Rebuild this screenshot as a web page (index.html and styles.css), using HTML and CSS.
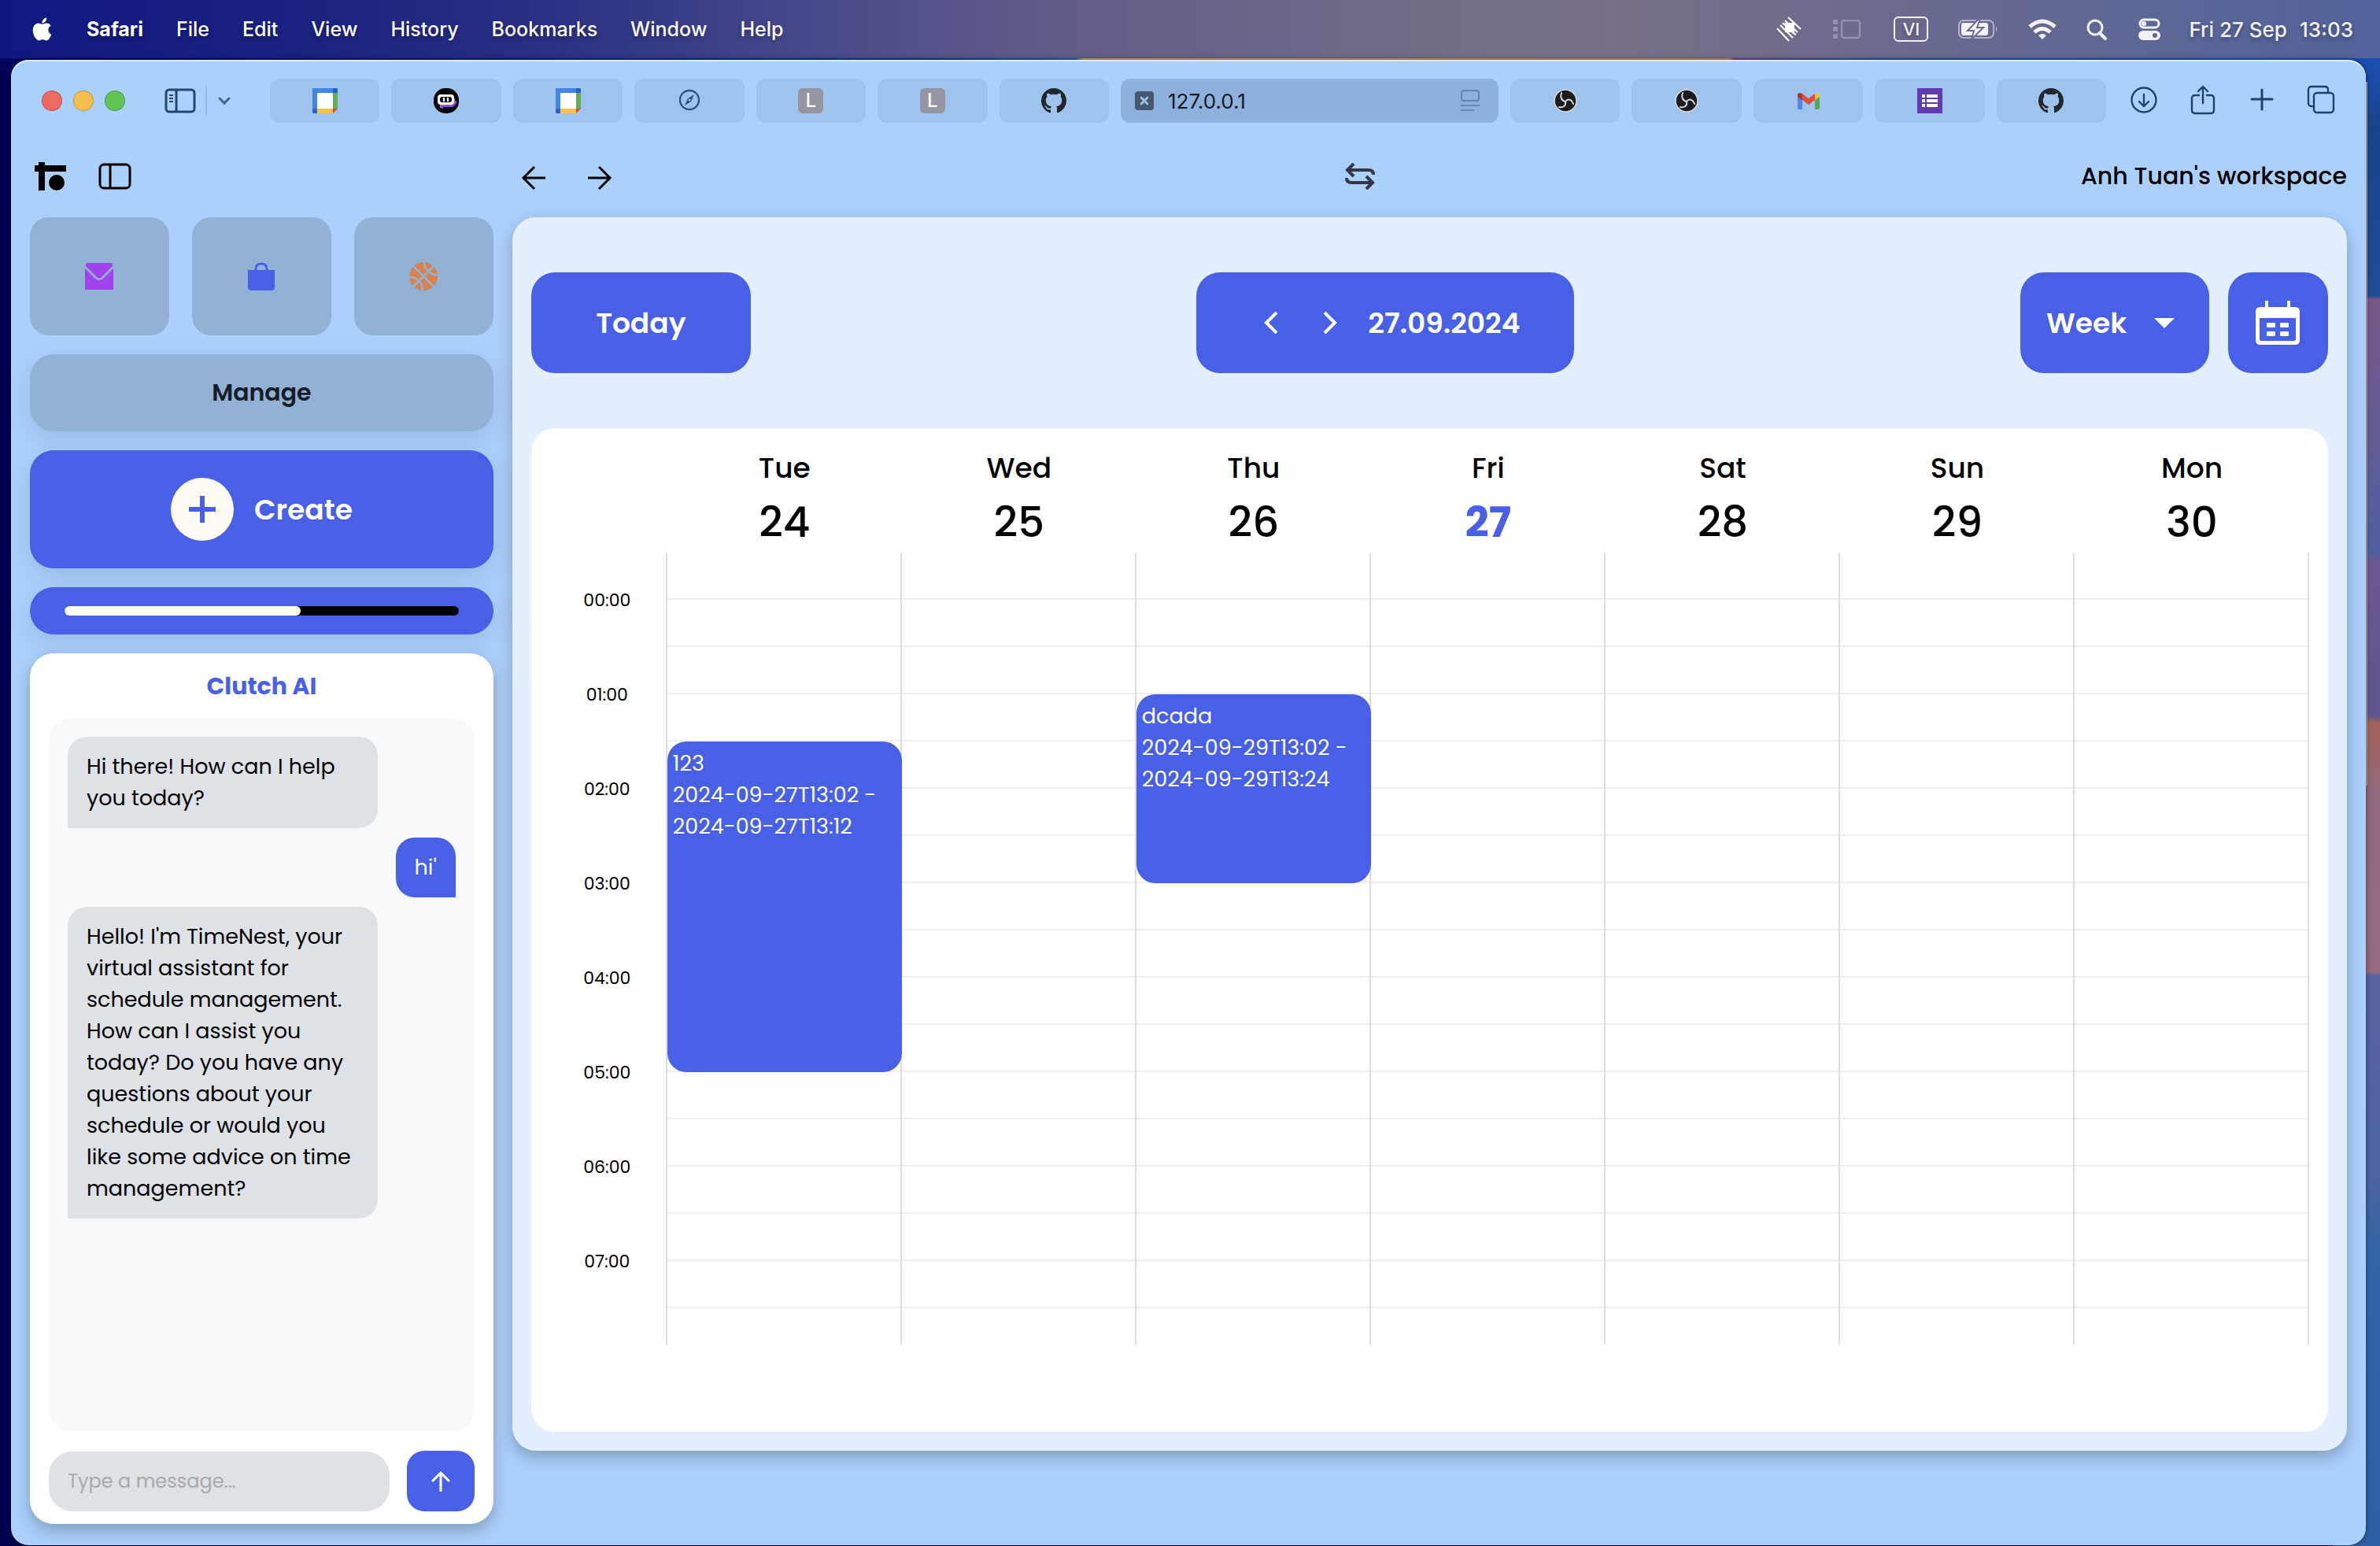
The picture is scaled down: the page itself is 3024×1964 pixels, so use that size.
FILE: index.html
```
<!DOCTYPE html>
<html lang="en">
<head>
<meta charset="utf-8">
<title>TimeNest</title>
<link rel="stylesheet" href="styles.css">
</head>
<body>
<svg class="sprite" aria-hidden="true">
  <symbol id="gcal" viewBox="0 0 32 32">
    <path fill="#fff" d="M6 6h20v20H6z"/><path fill="#4285e8" d="M1 0h25v6H6v20H0V1z"/><path fill="#2b62bd" d="M26 0h5l1 1v5h-6zM0 26h6v6H1l-1-1z"/><path fill="#61ad58" d="M26 6h6v20h-6z"/><path fill="#f4c150" d="M6 26h20v6H6z"/><path fill="#d94b3d" d="M26 26h6l-6 6z"/>
  </symbol>
  <symbol id="github" viewBox="0 0 16 16">
    <path fill="#22272e" d="M8 0C3.58 0 0 3.58 0 8c0 3.54 2.29 6.53 5.47 7.59.4.07.55-.17.55-.38 0-.19-.01-.82-.01-1.49-2.01.37-2.53-.49-2.69-.94-.09-.23-.48-.94-.82-1.13-.28-.15-.68-.52-.01-.53.63-.01 1.08.58 1.23.82.72 1.21 1.87.87 2.33.66.07-.52.28-.87.51-1.07-1.78-.2-3.64-.89-3.64-3.95 0-.87.31-1.59.82-2.15-.08-.2-.36-1.02.08-2.12 0 0 .67-.21 2.2.82.64-.18 1.32-.27 2-.27s1.36.09 2 .27c1.53-1.04 2.2-.82 2.2-.82.44 1.1.16 1.92.08 2.12.51.56.82 1.27.82 2.15 0 3.07-1.87 3.75-3.65 3.95.29.25.54.73.54 1.48 0 1.07-.01 1.93-.01 2.2 0 .21.15.46.55.38A8 8 0 0 0 16 8c0-4.42-3.58-8-8-8z"/>
  </symbol>
  <symbol id="obs" viewBox="0 0 32 32">
    <circle cx="16" cy="16" r="14" fill="#1c1c20" stroke="#d6d6da" stroke-width="1.6"/>
    <g fill="none" stroke="#d6d6da" stroke-width="2" stroke-linecap="round"><path d="M16 17c-5-1-7-6-5-11"/><path d="M16 17c3-4 8-3 10 3"/><path d="M16 17c1 5-2 8-8 7"/></g>
  </symbol>
</svg>

<header class="menubar">
  <nav class="menus" aria-label="Menu bar">
    <svg class="apple" viewBox="0 0 24 24" role="img" aria-label="Apple"><path fill="#fff" d="M12.152 6.896c-.948 0-2.415-1.078-3.96-1.04-2.04.027-3.91 1.183-4.961 3.014-2.117 3.675-.546 9.103 1.519 12.09 1.013 1.454 2.208 3.09 3.792 3.039 1.52-.065 2.09-.987 3.935-.987 1.831 0 2.35.987 3.96.948 1.637-.026 2.676-1.48 3.676-2.948 1.156-1.688 1.636-3.325 1.662-3.415-.039-.013-3.182-1.221-3.22-4.857-.026-3.04 2.48-4.494 2.597-4.559-1.429-2.09-3.623-2.324-4.39-2.376-2-.156-3.675 1.09-4.61 1.09zM15.53 3.83c.843-1.012 1.4-2.427 1.245-3.83-1.207.052-2.662.805-3.532 1.818-.78.896-1.454 2.338-1.273 3.714 1.338.104 2.715-.688 3.559-1.701"/></svg>
    <strong>Safari</strong><span>File</span><span>Edit</span><span>View</span><span>History</span><span>Bookmarks</span><span>Window</span><span>Help</span>
  </nav>
  <div class="status">
    <svg width="32" height="32" viewBox="0 0 32 32"><path fill="#fff" d="M11 8h12v12H11z"/><g stroke="#fff" stroke-width="2.2" fill="none"><path d="M15 1l16 15M1 15l15 16"/><path d="M11 5l4 4M23 16l4 4M5 11l16 16M8 8l3 3M20 20l5 3"/></g></svg>
    <svg class="dim" width="36" height="25" viewBox="0 0 36 25"><g fill="#9391ab"><rect width="6" height="6" rx="1"/><rect y="9" width="6" height="6" rx="1"/><rect y="18" width="6" height="6" rx="1"/></g><rect x="11" y="1" width="23" height="22" rx="3" fill="none" stroke="#9391ab" stroke-width="2.4"/></svg>
    <span class="lang">VI</span>
    <svg class="battery" width="52" height="26" viewBox="0 0 52 26"><rect x="1" y="2" width="44" height="22" rx="6" fill="none" stroke="#b2b2c6" stroke-width="2"/><path fill="#b2b2c6" d="M48 9q3 4 0 8z"/><rect x="4" y="5" width="34" height="16" rx="3" fill="#f2f2f6"/><path fill="#f2f2f6" stroke="#6a6b92" stroke-width="2" d="M26 0L12 15h8l-3 11 15-15h-8l4-11z"/></svg>
    <svg class="wifi" width="36" height="27" viewBox="0 0 36 27"><g fill="none" stroke="#f2f2f6" stroke-width="5"><path d="M2 10q16-14 32 0"/><path d="M8 17q10-9 20 0"/></g><path fill="#f2f2f6" d="M18 26l-5-5q5-4 10 0z"/></svg>
    <svg class="search" width="26" height="27" viewBox="0 0 26 27"><circle cx="11" cy="11" r="9" fill="none" stroke="#f2f2f6" stroke-width="3"/><path d="M17 18l7 7" stroke="#f2f2f6" stroke-width="4" stroke-linecap="round"/></svg>
    <svg class="control" width="28" height="28" viewBox="0 0 28 28"><rect x="2" y="2" width="24" height="10" rx="5" fill="none" stroke="#f2f2f6" stroke-width="3"/><circle cx="7" cy="7" r="3" fill="#f2f2f6"/><rect y="16" width="28" height="12" rx="6" fill="#f2f2f6"/><circle cx="21" cy="22" r="3" fill="#60668f"/></svg>
    <span class="clock"><span>Fri 27 Sep</span><span>13:03</span></span>
  </div>
</header>

<div class="window">
  <div class="toolbar">
    <div class="lights"><i class="close"></i><i class="minimise"></i><i class="expand"></i></div>
    <button class="tool" aria-label="Show sidebar"><svg width="40" height="32" viewBox="0 0 40 32" fill="none" stroke="#25466f" stroke-width="3"><rect x="2" y="2" width="36" height="28" rx="4"/><path d="M15 2v28"/><path d="M6 9h5M6 13h5M6 17h5" stroke-width="2"/></svg></button>
    <button class="tool more" aria-label="Tab groups"><svg width="16" height="10" viewBox="0 0 16 10" fill="none" stroke="#41638e" stroke-width="3" stroke-linecap="round"><path d="M2 2l6 6 6-6"/></svg></button>
    <div class="tabs">
      <button class="tab" aria-label="Google Calendar"><svg><use href="#gcal"/></svg></button>
      <button class="tab" aria-label="Poe"><svg viewBox="0 0 32 32"><rect width="32" height="32" rx="15"/><path fill="none" stroke="#7b4fe0" stroke-width="2" d="M11 26v-3h13l4-4v-3"/><path fill="none" stroke="#d94ec4" stroke-width="2" d="M9 25v-4h14l3-3v-5"/><rect x="5" y="8" width="21" height="13" rx="4" fill="#fff"/><rect x="8" y="11" width="15" height="7" rx="3"/><path stroke="#fff" stroke-width="2.4" stroke-linecap="round" d="M13 13v3M18 13v3"/></svg></button>
      <button class="tab" aria-label="Google Calendar"><svg><use href="#gcal"/></svg></button>
      <button class="tab" aria-label="Start page"><svg viewBox="0 0 32 32"><circle cx="16" cy="15" r="12" fill="none" stroke="#2f5383" stroke-width="2.4"/><path fill="#2f5383" fill-rule="evenodd" d="M22 8l-4 9-8 5 4-9zM16 13.500a1.500 1.500 0 1 0 0 3 1.500 1.500 0 0 0 0-3z"/></svg></button>
      <button class="tab"><span class="letter">L</span></button>
      <button class="tab"><span class="letter">L</span></button>
      <button class="tab" aria-label="GitHub"><svg><use href="#github"/></svg></button>
      <div class="tab address">
        <button class="plain" aria-label="Close tab"><svg width="24" height="24" viewBox="0 0 24 24"><rect width="24" height="24" rx="4" fill="#48596f"/><path d="M8 8l8 8M16 8l-8 8" stroke="#a6c3e6" stroke-width="2.600" stroke-linecap="round"/></svg></button>
        <input class="url" aria-label="Address" value="127.0.0.1">
        <svg class="reader" viewBox="0 0 24 28" fill="none" stroke="#6886ab" stroke-width="2"><rect x="1" y="1" width="22" height="13" rx="3"/><path d="M0 20h24M0 26h17"/></svg>
      </div>
      <button class="tab" aria-label="OBS"><svg><use href="#obs"/></svg></button>
      <button class="tab" aria-label="OBS"><svg><use href="#obs"/></svg></button>
      <button class="tab" aria-label="Gmail"><svg viewBox="0 0 32 32"><path fill="#4f86ec" d="M2 10l6 4v13H4q-2 0-2-2z"/><path fill="#58a55c" d="M30 10l-6 4v13h4q2 0 2-2z"/><path fill="#d8503f" d="M8 7l8 6 8-6v8l-8 6-8-6z"/><path fill="#b3312c" d="M2 9q0-3 3-3l3 1v8l-6-4z"/><path fill="#f2bf42" d="M30 9q0-3-3-3l-3 1v8l6-4z"/></svg></button>
      <button class="tab" aria-label="Google Forms"><svg viewBox="0 0 32 32"><rect width="32" height="32" rx="1" fill="#623bae"/><path stroke="#fff" stroke-width="4" d="M6 10h4M12 10h14M6 16h4M12 16h14M6 22h4M12 22h14"/></svg></button>
      <button class="tab" aria-label="GitHub"><svg><use href="#github"/></svg></button>
    </div>
    <div class="actions">
      <button class="plain" aria-label="Downloads"><svg width="36" height="40" viewBox="0 0 36 40" fill="none" stroke="#20416b" stroke-width="2.400" stroke-linecap="round"><circle cx="18" cy="19" r="15.500"/><path d="M18 12v15M12 21l6 6 6-6"/></svg></button>
      <button class="plain" aria-label="Share"><svg width="36" height="40" viewBox="0 0 36 40" fill="none" stroke="#20416b" stroke-width="2.400" stroke-linecap="round"><path d="M13 13H8q-4 0-4 4v15q0 4 4 4h20q4 0 4-4V17q0-4-4-4h-5M18 23V2M12 8l6-6 6 6"/></svg></button>
      <button class="plain" aria-label="New tab"><svg width="36" height="40" viewBox="0 0 36 40" stroke="#20416b" stroke-width="3" stroke-linecap="round"><path d="M18 6v25M5 18h26"/></svg></button>
      <button class="plain" aria-label="Tab overview"><svg width="36" height="40" viewBox="0 0 36 40" fill="none" stroke="#20416b" stroke-width="2.400"><rect x="9" y="10" width="25" height="25" rx="4"/><path d="M9 27H6q-4 0-4-4V6q0-4 4-4h17q4 0 4 4v4"/></svg></button>
    </div>
  </div>

  <header class="appbar">
    <div class="brand">
      <svg width="40" height="38" viewBox="0 0 40 38" role="img" aria-label="TimeNest"><path d="M5 1h8v4h27v8H13v24H5V13H0V5h5z"/><circle cx="28" cy="27" r="10"/></svg>
      <button class="plain" aria-label="Toggle sidebar"><svg width="42" height="34" viewBox="0 0 42 34" fill="none" stroke="#000" stroke-width="3"><rect x="2" y="2" width="38" height="30" rx="5"/><path d="M15 2v30"/></svg></button>
    </div>
    <div class="route">
      <div class="history">
        <button class="plain" aria-label="Back"><svg width="32" height="32" viewBox="0 0 32 32" fill="none" stroke="#000" stroke-width="3"><path d="M31 16H3M17 2L3 16l14 14"/></svg></button>
        <button class="plain" aria-label="Forward"><svg width="32" height="32" viewBox="0 0 32 32" fill="none" stroke="#000" stroke-width="3"><path d="M1 16h28M15 2l14 14-14 14"/></svg></button>
      </div>
      <button class="plain" aria-label="Switch workspace"><svg width="38" height="34" viewBox="0 0 38 34" fill="none" stroke="#343741" stroke-width="4"><path d="M11 1L3 9l8 8M3 9h27q6 0 6 6M27 17l8 8-8 8M35 25H8q-6 0-6-6"/></svg></button>
      <h1 class="workspace">Anh Tuan's workspace</h1>
    </div>
  </header>

  <div class="content">
    <aside class="sidebar">
      <div class="tiles">
        <button class="tile" aria-label="Mail"><svg width="36" height="34" viewBox="0 0 36 34" fill="#a142ec"><path d="M3 0h30q2 0 2 4L21 18q-3 3-6 0L1 4q0-4 2-4z"/><path d="M0 7l13 13q5 4 10 0L36 7v27H0z"/></svg></button>
        <button class="tile" aria-label="Work"><svg width="36" height="36" viewBox="0 0 36 36"><path fill="#4860e6" d="M1 10h34v22q0 4-4 4H5q-4 0-4-4z"/><path fill="none" stroke="#4860e6" stroke-width="3" d="M11 11V9q0-7 7-7t7 7v2"/></svg></button>
        <button class="tile" aria-label="Sport"><svg width="36" height="36" viewBox="0 0 36 36"><circle cx="18" cy="18" r="18" fill="#d9814e"/><path fill="none" stroke="#91b1d5" stroke-width="2.600" d="M5 5l26 26M31 5L5 31M19 0q0 14 17 17M0 19q16 0 17 17"/></svg></button>
      </div>
      <button class="manage">Manage</button>
      <button class="create"><span class="plus"><svg width="34" height="34" viewBox="0 0 34 34" stroke="#4860e6" stroke-width="6"><path d="M17 0v34M0 17h34"/></svg></span>Create</button>
      <div class="progress"><div class="track" role="progressbar" aria-label="Progress" aria-valuenow="60"><div class="fill" style="width:60%"></div></div></div>
      <section class="chat">
        <h2 class="chat-title">Clutch AI</h2>
        <div class="messages">
          <p class="msg">Hi there! How can I help you today?</p>
          <p class="msg mine">hi'</p>
          <p class="msg">Hello! I'm TimeNest, your virtual assistant for schedule management. How can I assist you today? Do you have any questions about your schedule or would you like some advice on time management?</p>
        </div>
        <form class="composer">
          <input class="composer-text" aria-label="Message" placeholder="Type a message...">
          <button class="send" type="button" aria-label="Send"><svg width="24" height="26" viewBox="0 0 24 26" fill="none" stroke="#fff" stroke-width="3" stroke-linecap="round"><path d="M12 25V2M2 12L12 2l10 10"/></svg></button>
        </form>
      </section>
    </aside>

    <main class="panel">
      <div class="controls">
        <button class="control-btn today">Today</button>
        <div class="control-btn date">
          <button class="plain" aria-label="Previous"><svg width="18" height="28" viewBox="0 0 18 28" fill="none" stroke="#fff" stroke-width="4"><path d="M16 1L3 14l13 13"/></svg></button>
          <button class="plain" aria-label="Next"><svg width="18" height="28" viewBox="0 0 18 28" fill="none" stroke="#fff" stroke-width="4"><path d="M2 1l13 13L2 27"/></svg></button>
          <span class="date-text">27.09.2024</span>
        </div>
        <div class="view">
          <div class="picker">
            <select class="control-btn picker-select" aria-label="View"><option>Week</option></select>
            <svg class="caret" width="26" height="13" viewBox="0 0 26 13"><path fill="#fff" d="M0 0h26L13 13z"/></svg>
          </div>
          <button class="control-btn cal" aria-label="Choose date"><svg width="56" height="58" viewBox="0 0 56 58"><path fill="none" stroke="#fff" stroke-width="4" d="M14 12V1M42 12V1"/><path fill="#fff" fill-rule="evenodd" d="M6 9h44q6 0 6 6v36q0 6-6 6H6q-6 0-6-6V15q0-6 6-6zM5 23v27q0 2 2 2h42q2 0 2-2V23z"/><g fill="#fff"><rect x="14" y="29" width="11" height="6" rx="1"/><rect x="31" y="29" width="11" height="6" rx="1"/><rect x="14" y="40" width="11" height="6" rx="1"/><rect x="31" y="40" width="11" height="6" rx="1"/></g></svg></button>
        </div>
      </div>

      <section class="calendar">
        <div class="days">
          <div></div>
          <div class="day">Tue<b>24</b></div>
          <div class="day">Wed<b>25</b></div>
          <div class="day">Thu<b>26</b></div>
          <div class="day current">Fri<b>27</b></div>
          <div class="day">Sat<b>28</b></div>
          <div class="day">Sun<b>29</b></div>
          <div class="day">Mon<b>30</b></div>
        </div>
        <div class="schedule">
          <div class="hours"><span>00:00</span><span>01:00</span><span>02:00</span><span>03:00</span><span>04:00</span><span>05:00</span><span>06:00</span><span>07:00</span></div>
          <div class="column">
            <article class="event" style="grid-row:5 / span 7">123<br>2024-09-27T13:02 -<br>2024-09-27T13:12</article>
          </div>
          <div class="column"></div>
          <div class="column">
            <article class="event" style="grid-row:4 / span 4">dcada<br>2024-09-29T13:02 -<br>2024-09-29T13:24</article>
          </div>
          <div class="column"></div>
          <div class="column"></div>
          <div class="column"></div>
          <div class="column"></div>
        </div>
      </section>
    </main>
  </div>
</div>
</body>
</html>
```
FILE: styles.css
```
* { box-sizing: border-box; }

:root {
  --blue: #4860e6;
  --sky: #abd0fb;
  --steel: #91b1d5;
  --grey: #dee1e6;
  --radius: 30px;
}

body {
  margin: 0;
  min-height: 100vh;
  display: flex;
  flex-direction: column;
  font-family: Poppins, Inter, sans-serif;
  font-size: 26px;
  color: #000;
  background:
    linear-gradient(#b5b5b0, #a9a5a0) right 16px top 104px / 3px 894px no-repeat,
    linear-gradient(#1c4fb4 76px, #1a4489 160px, #1f4c95 376px, #78578a 380px, #4f609f 700px, #6b5890 716px, #5f5590 910px, #a26258 918px, #93697c 1010px, #986a7e 1234px, #5a62a0 1240px, #4c63a2 1500px, #2f66a8 1600px, #2c60a4) right / 60px 100% no-repeat,
    linear-gradient(90deg, #04045c, #0d3f92 1200px, #2462b0 1366px, #c9a56c 1378px, #c98a58 2196px, #6f4a86 2204px, #1e57a8 2400px, #1c4fb4) top / 100% 90px no-repeat,
    #00004f;
}

h1, h2, p { margin: 0; }

button, input, select {
  font: inherit;
  color: inherit;
  border: 0;
  padding: 0;
  background: none;
}

svg { display: block; flex: none; }

.sprite { display: none; }

.plain { display: flex; align-items: center; justify-content: center; }

/* System menu bar */
.menubar {
  height: 74px;
  padding: 0 34px 0 39px;
  display: flex;
  align-items: center;
  justify-content: space-between;
  color: #fff;
  font-family: Inter, sans-serif;
  font-weight: 500;
  background: linear-gradient(90deg, #0f1880, #1b2280 13%, #2a3083 23%, #45478a 33%, #605c88 44%, #747086 63%, #777085 67%, #6e6b8c 77%, #50639b);
}

.menus, .status { display: flex; align-items: center; text-shadow: 0 3px 5px rgba(0, 0, 0, .3); }
.menus { gap: 42px; font-size: 25px; }
.apple { width: 29px; height: 30px; }
.status { color: #f2f2f6; }
.dim { margin-left: 40px; }
.lang {
  width: 44px;
  height: 32px;
  margin-left: 41px;
  border: 2px solid #f2f2f6;
  border-radius: 6px;
  font-size: 22px;
  line-height: 28px;
  text-align: center;
}
.battery { margin-left: 38px; }
.wifi { margin-left: 37px; }
.search { margin-left: 38px; }
.control { margin-left: 40px; }
.clock { margin-left: 36px; display: flex; gap: 16px; }

/* Browser window */
.window {
  flex: 1;
  margin: 2px 18px 1px 14px;
  border-radius: 22px;
  display: flex;
  flex-direction: column;
  background: var(--sky);
  box-shadow: inset 0 2px 1px rgba(255, 255, 255, .6), 0 0 6px rgba(0, 0, 0, .5);
}

.toolbar { height: 104px; padding: 0 39px; display: flex; align-items: center; }
.lights { display: flex; gap: 14px; }
.lights i { width: 26px; height: 26px; border-radius: 50%; border: 1px solid rgba(0, 0, 0, .2); }
.close { background: #ed6a5e; }
.minimise { background: #f5bf4f; }
.expand { background: #61c554; }
.tool { margin-left: 50px; }
.more { height: 38px; margin-left: 12px; padding-left: 14px; border-left: 2px solid #98bce8; }

.tabs { flex: 1; margin: 0 30px 0 50px; display: flex; gap: 15px; }
.tab {
  flex: 1;
  height: 56px;
  border-radius: 12px;
  display: flex;
  align-items: center;
  justify-content: center;
  background: #9ec3ed;
}
.tab > svg { width: 32px; height: 32px; }
.letter {
  width: 32px;
  height: 32px;
  border-radius: 6px;
  background: #9596a3;
  color: #fff;
  font: 500 24px/32px Inter, sans-serif;
}
.address { flex: none; width: 480px; padding: 0 24px 0 18px; background: #8db1dc; }
.url { flex: 1; min-width: 0; margin-left: 18px; font-family: Inter, sans-serif; color: #15191f; }
.tab > .reader { width: 24px; height: 28px; }
.actions { display: flex; gap: 39px; }

/* Application bar */
.appbar {
  height: 96px;
  padding: 0 24px 8px;
  display: grid;
  grid-template-columns: 20% minmax(0, 1fr);
  gap: 24px;
  align-items: center;
}
.brand { padding-left: 6px; display: flex; align-items: center; gap: 41px; }
.route { display: flex; align-items: center; justify-content: space-between; }
.history { display: flex; gap: 30px; margin: 4px 24px 0 0; }
.history button { width: 54px; }
.workspace { font-size: 30px; font-weight: 500; line-height: 48px; }

.content {
  flex: 1;
  padding: 0 24px 27px;
  display: grid;
  grid-template-columns: 20% minmax(0, 1fr);
  gap: 24px;
}

/* Sidebar */
.sidebar { display: flex; flex-direction: column; gap: 24px; }
.tiles { display: grid; grid-template-columns: repeat(3, 1fr); gap: 29px; }
.tile {
  height: 150px;
  border-radius: 24px;
  display: flex;
  align-items: center;
  justify-content: center;
  background: var(--steel);
}
.manage, .create, .progress { border-radius: var(--radius); box-shadow: 0 10px 30px rgba(0, 0, 0, .1); }
.manage { height: 98px; background: var(--steel); color: #171d27; font-size: 30px; font-weight: 600; }
.create {
  height: 150px;
  display: flex;
  align-items: center;
  justify-content: center;
  gap: 26px;
  background: var(--blue);
  color: #fff;
  font-size: 36px;
  font-weight: 600;
}
.plus {
  width: 80px;
  height: 80px;
  border-radius: 50%;
  display: flex;
  align-items: center;
  justify-content: center;
  background: #fffcf5;
}
.progress { height: 60px; padding: 24px 44px; background: var(--blue); }
.track { height: 12px; border-radius: 6px; background: #000; }
.fill { height: 12px; border-radius: 6px; background: #fff; }

/* Chat */
.chat {
  flex: 1;
  padding: 22px 24px 16px;
  border-radius: var(--radius);
  display: flex;
  flex-direction: column;
  background: #fff;
  box-shadow: 0 8px 20px rgba(0, 0, 0, .25);
}
.chat-title { font-size: 30px; line-height: 40px; font-weight: 700; text-align: center; color: var(--blue); }
.messages {
  flex: 1;
  margin: 20px 0 24px;
  padding: 24px;
  border-radius: var(--radius);
  display: flex;
  flex-direction: column;
  gap: 12px;
  background: #f8f9fb;
}
.msg {
  width: 80%;
  padding: 18px 24px;
  border-radius: 24px 24px 24px 0;
  font-size: 27px;
  line-height: 40px;
  background: var(--grey);
}
.mine { width: auto; align-self: flex-end; border-radius: 24px 24px 0 24px; background: var(--blue); color: #fff; }
.composer { display: flex; align-items: center; gap: 22px; }
.composer-text { flex: 1; min-width: 0; height: 76px; padding: 0 24px; border-radius: var(--radius); background: var(--grey); font-size: 24px; }
.composer-text::placeholder { color: #a9a9a9; }
.send {
  width: 86px;
  height: 77px;
  border-radius: 22px;
  display: flex;
  align-items: center;
  justify-content: center;
  background: var(--blue);
}

/* Calendar panel */
.panel {
  margin-bottom: 93px;
  padding: 70px 24px 24px;
  border-radius: var(--radius);
  display: flex;
  flex-direction: column;
  gap: 70px;
  background: #e3efff;
  box-shadow: 0 8px 20px rgba(0, 0, 0, .25);
}
.controls { display: flex; justify-content: space-between; align-items: center; }
.control-btn {
  height: 128px;
  border-radius: var(--radius);
  background: var(--blue);
  color: #fff;
  font-size: 36px;
  font-weight: 600;
}
.today { width: 279px; }
.date { width: 480px; display: flex; align-items: center; justify-content: center; padding-left: 8px; }
.date .plain { width: 36px; height: 56px; margin-right: 39px; }
.date .plain + .plain { margin-right: 30px; }
.view { display: flex; justify-content: flex-end; gap: 24px; }
.picker { position: relative; }
.picker-select { width: 240px; padding-left: 33px; appearance: none; }
.caret { position: absolute; right: 44px; top: 58px; pointer-events: none; }
.cal { width: 127px; display: flex; align-items: center; justify-content: center; }

.calendar {
  flex: 1;
  padding-right: 24px;
  border-radius: var(--radius);
  background: #fff;
}
.days, .schedule { display: grid; grid-template-columns: 173px repeat(7, minmax(0, 1fr)); }
.day { height: 158px; padding-top: 26px; font-size: 36px; line-height: 50px; font-weight: 500; text-align: center; }
.day b { display: block; font-size: 53px; line-height: 88px; font-weight: 500; }
.current b { font-weight: 700; color: var(--blue); }

.hours { padding-left: 22px; border-right: 2px solid #dcdcdc; }
.hours span { display: block; height: 120px; line-height: 122px; font-size: 22px; text-align: center; }
.column {
  height: 1006px;
  border-right: 2px solid #dcdcdc;
  display: grid;
  grid-auto-rows: 60px;
  background: repeating-linear-gradient(transparent 0 58px, #eee 58px 60px);
}
.event {
  margin-right: -2px;
  padding: 8px 7px;
  border-radius: 24px;
  font-size: 27px;
  line-height: 40px;
  background: var(--blue);
  color: #fff;
}
```
